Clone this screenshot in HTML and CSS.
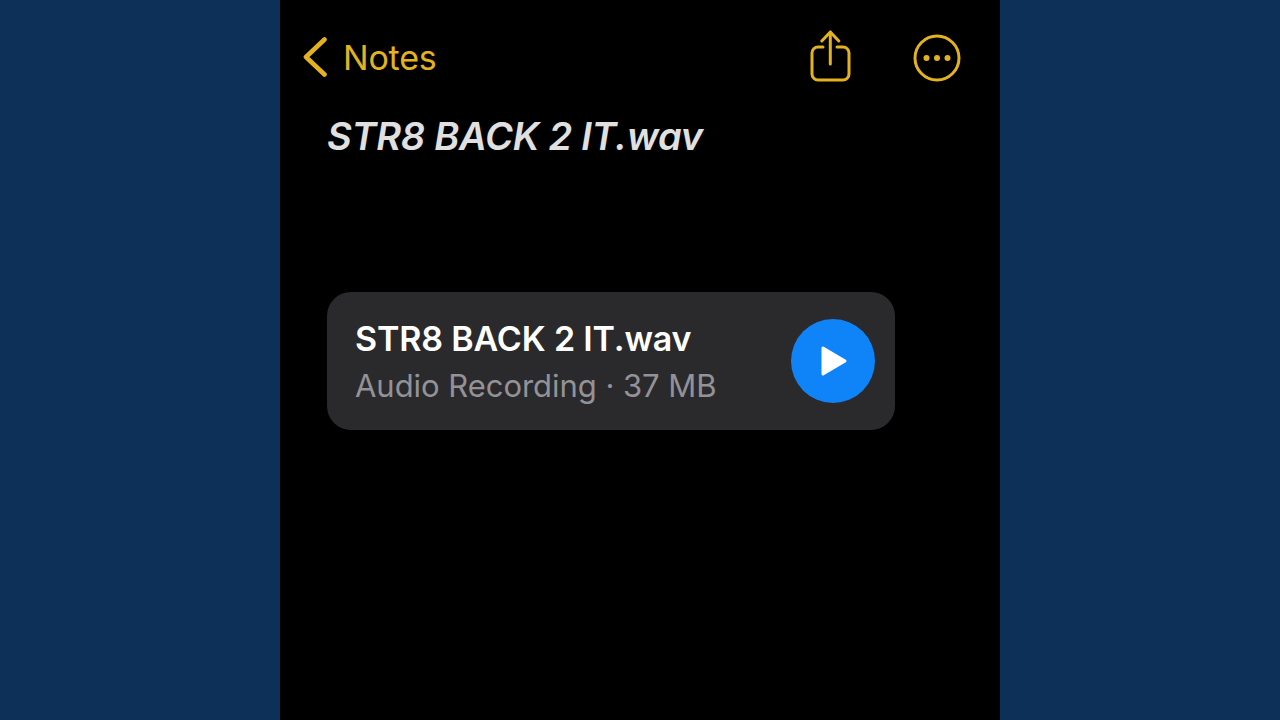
FILE: index.html
```html
<!DOCTYPE html>
<html lang="en">
<head>
<meta charset="utf-8">
<title>STR8 BACK 2 IT.wav</title>
<link rel="stylesheet" href="styles.css">
</head>
<body>
<main class="phone">
  <header class="nav">
    <div class="back">
      <svg class="chevron" width="24" height="42" viewBox="0 0 24 42" aria-hidden="true"><path d="M21.500 3.500 3 21l18.500 17.500" fill="none" stroke="#e3b21f" stroke-width="4.600" stroke-linecap="round" stroke-linejoin="round"/></svg>
      <span class="back-label">Notes</span>
    </div>
    <div class="actions">
      <svg class="share" width="42" height="54" viewBox="0 0 42 54" aria-hidden="true"><g fill="none" stroke="#e3b21f" stroke-width="3" stroke-linecap="round" stroke-linejoin="round"><path d="M14 17H9a6 6 0 0 0-6 6v21a6 6 0 0 0 6 6h25a6 6 0 0 0 6-6V23a6 6 0 0 0-6-6h-6"/><path d="M21.300 34V2"/><path d="M12.800 11l8.500-9 8.500 9"/></g></svg>
      <svg class="more" width="48" height="48" viewBox="0 0 48 48" aria-hidden="true"><circle cx="24" cy="24" r="22" fill="none" stroke="#e3b21f" stroke-width="3"/><circle cx="13.500" cy="24" r="3" fill="#e3b21f"/><circle cx="24" cy="24" r="3" fill="#e3b21f"/><circle cx="34.500" cy="24" r="3" fill="#e3b21f"/></svg>
    </div>
  </header>
  <h1 class="title">STR8 BACK 2 IT.wav</h1>
  <section class="card">
    <div class="meta">
      <div class="name">STR8 BACK 2 IT.wav</div>
      <div class="sub">Audio Recording · 37 MB</div>
    </div>
    <div class="play">
      <svg width="30" height="32" viewBox="0 0 30 32" aria-hidden="true"><path d="M3 3v26l22-13z" fill="#fff" stroke="#fff" stroke-width="3" stroke-linejoin="round"/></svg>
    </div>
  </section>
</main>
</body>
</html>
```
FILE: styles.css
```css
* { box-sizing: border-box; }
html, body { margin: 0; height: 100%; }
body {
  background: #0c3057;
  display: flex;
  justify-content: center;
  overflow: hidden;
  font-family: Inter, "Liberation Sans", sans-serif;
}
.phone {
  width: 720px;
  height: 720px;
  background: #000;
  display: flex;
  flex-direction: column;
  padding: 30px 39px 0 47px;
}
.nav {
  display: flex;
  justify-content: space-between;
  align-items: center;
  height: 54px;
  margin-left: -24px;
}
.back { display: flex; align-items: center; gap: 16px; }
.chevron { display: block; }
.back-label {
  color: #e3b21f;
  font-size: 34px;
  line-height: 42px;
  letter-spacing: -0.2px;
  padding-top: 1px;
}
.actions { display: flex; align-items: center; gap: 62px; }
.share { display: block; }
.more { display: block; margin-top: 1px; }
.title {
  margin: 30px 0 0;
  color: #e0e0e0;
  font-size: 38px;
  line-height: 44px;
  font-style: italic;
  font-weight: 600;
  letter-spacing: -0.25px;
}
.card {
  margin-top: 134px;
  width: 568px;
  height: 138px;
  border-radius: 24px;
  background: #2a2a2c;
  display: flex;
  align-items: center;
  justify-content: space-between;
  padding: 0 20px 0 28px;
}
.name {
  color: #fff;
  font-size: 34px;
  line-height: 44px;
  font-weight: 600;
  letter-spacing: -0.15px;
}
.sub {
  color: #929297;
  font-size: 31px;
  line-height: 40px;
  margin-top: 5px;
  letter-spacing: -0.04px;
}
.play {
  width: 84px;
  height: 84px;
  border-radius: 50%;
  background: #0f84f8;
  display: flex;
  align-items: center;
  justify-content: center;
  padding-left: 4px;
}
.play svg { display: block; }
```
